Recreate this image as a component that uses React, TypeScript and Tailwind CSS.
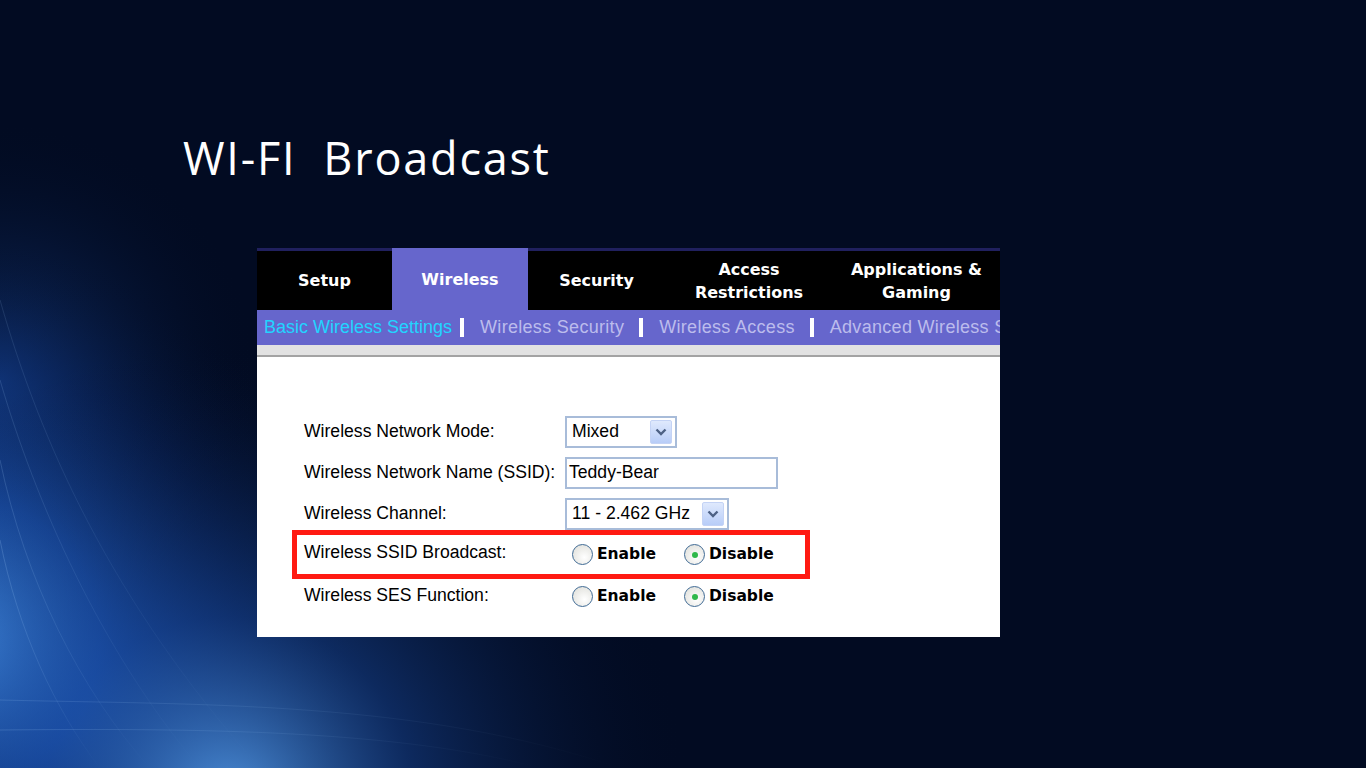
import React from 'react';

const tabs = [
  { label: ['Setup'], w: 'w-[135px]' },
  { label: ['Wireless'], w: 'w-[136px]', active: true },
  { label: ['Security'], w: 'w-[137px]' },
  { label: ['Access', 'Restrictions'], w: 'w-[168px]' },
  { label: ['Applications &', 'Gaming'], w: 'w-[167px]' },
];

const subLinks = ['Wireless Security', 'Wireless Access', 'Advanced Wireless S'];

const Backdrop = () => (
  <svg className="absolute inset-0" width="1366" height="768" viewBox="0 0 1366 768">
    <defs>
      <radialGradient id="glowLeft" cx="-40" cy="640" r="400" gradientUnits="userSpaceOnUse">
        <stop offset="0" stopColor="#4a9af5" stopOpacity="1" />
        <stop offset="0.35" stopColor="#1f5cc2" stopOpacity="0.75" />
        <stop offset="0.7" stopColor="#0b2a6c" stopOpacity="0.35" />
        <stop offset="1" stopColor="#020b22" stopOpacity="0" />
      </radialGradient>
      <radialGradient id="glowBottom" cx="230" cy="800" r="460" gradientUnits="userSpaceOnUse">
        <stop offset="0" stopColor="#5aa6f7" stopOpacity="0.85" />
        <stop offset="0.4" stopColor="#1b4fa8" stopOpacity="0.45" />
        <stop offset="1" stopColor="#020b22" stopOpacity="0" />
      </radialGradient>
      <radialGradient id="glowEdge" cx="0" cy="380" r="260" gradientUnits="userSpaceOnUse">
        <stop offset="0" stopColor="#1a4ea8" stopOpacity="0.6" />
        <stop offset="1" stopColor="#020b22" stopOpacity="0" />
      </radialGradient>
      <linearGradient id="streak" x1="0" y1="0" x2="1" y2="0">
        <stop offset="0" stopColor="#a9d4ff" stopOpacity="0.5" />
        <stop offset="1" stopColor="#a9d4ff" stopOpacity="0" />
      </linearGradient>
    </defs>
    <rect width="1366" height="768" fill="#020b22" />
    <rect width="1366" height="768" fill="url(#glowEdge)" />
    <rect width="1366" height="768" fill="url(#glowLeft)" />
    <rect width="1366" height="768" fill="url(#glowBottom)" />
    <g fill="none" stroke="url(#streak)" strokeWidth="1">
      <path d="M0 300 C 40 440, 110 600, 260 768" opacity="0.25" />
      <path d="M0 380 C 35 500, 100 650, 200 768" opacity="0.3" />
      <path d="M0 460 C 25 580, 80 690, 150 768" opacity="0.35" />
      <path d="M0 540 C 18 630, 55 710, 100 768" opacity="0.4" />
      <path d="M0 700 C 200 705, 420 700, 620 768" opacity="0.3" />
      <path d="M0 730 C 200 728, 400 730, 540 768" opacity="0.35" />
    </g>
  </svg>
);

const Dropdown = ({ value, w }: { value: string; w: string }) => (
  <div className={`${w} h-[32px] border-2 border-[#a8bcd9] bg-white flex items-center justify-between pl-[5px] pr-[3px]`}>
    <span className="text-[17.6px] text-black">{value}</span>
    <span className="w-[22px] h-[24px] rounded-[2px] bg-[linear-gradient(#dfe9fd,#b8cdf8)] border border-[#c4d3f5] flex items-center justify-center">
      <svg width="12" height="8" viewBox="0 0 12 8">
        <path d="M1.5 1.5 L6 6 L10.5 1.5" fill="none" stroke="#4d6185" strokeWidth="2.4" />
      </svg>
    </span>
  </div>
);

const Radio = ({ checked }: { checked?: boolean }) => (
  <span className="w-[21px] h-[21px] rounded-full border-[1.5px] border-[#3f6a94] bg-[radial-gradient(circle_at_60%_65%,#ffffff,#dcdcd6)] flex items-center justify-center">
    {checked && <span className="w-[6px] h-[6px] rounded-full bg-[#2fb84a]" />}
  </span>
);

const RadioPair = () => (
  <div className="flex items-center font-['DejaVu_Sans',sans-serif] font-bold text-[15.5px] text-black">
    <Radio />
    <span className="ml-[4px] w-[87px]">Enable</span>
    <Radio checked />
    <span className="ml-[4px]">Disable</span>
  </div>
);

export default function App() {
  return (
    <div className="relative w-[1366px] h-[768px] overflow-hidden bg-[#020b22] font-['Liberation_Sans',Arial,sans-serif]">
      <Backdrop />
      <div className="relative pl-[183px] pt-[128px]">
        <h1 className="font-['Open_Sans',sans-serif] text-[45px] leading-[60px] tracking-[1.8px] text-white font-normal">
          WI-FI&nbsp; Broadcast
        </h1>

        <div className="ml-[74px] mt-[60px] w-[743px] bg-white">
          {/* main tabs */}
          <div className="flex h-[62px] bg-black border-t-[3px] border-[#20205e] font-['DejaVu_Sans',sans-serif] font-bold text-white text-[16px] leading-[23px]">
            {tabs.map((t) => (
              <div
                key={t.label[0]}
                className={`${t.w} flex flex-col items-center justify-center text-center ${t.active ? 'bg-[#6666cc] -mt-[3px] h-[62px]' : ''}`}
              >
                {t.label.map((l) => (
                  <span key={l}>{l}</span>
                ))}
              </div>
            ))}
          </div>

          {/* sub tabs (the last one runs past the panel edge, as in the original frame) */}
          <div className="h-[35px] bg-[#6666cc] flex items-center pl-[7px] text-[18px] whitespace-nowrap overflow-hidden">
            <span className="text-[#22d4ff]">Basic Wireless Settings</span>
            {subLinks.map((s, i) => (
              <React.Fragment key={s}>
                <span className={`${i === 0 ? 'ml-[8px]' : 'ml-[15px]'} mr-[16px] w-[4px] h-[19px] shrink-0 bg-white`} />
                <span className="text-[#bcbcec] tracking-[0.3px]">{s}</span>
              </React.Fragment>
            ))}
          </div>

          {/* grey band */}
          <div className="h-[12px] bg-[#e2e2e2] border-b-2 border-[#a3a3a3]" />

          {/* form */}
          <div className="pt-[54px] pb-[21px] text-[17.6px] text-black">
            <div className="h-[41px] flex items-center pl-[47px]">
              <span className="w-[261px]">Wireless Network Mode:</span>
              <Dropdown value="Mixed" w="w-[112px]" />
            </div>
            <div className="h-[41px] flex items-center pl-[47px]">
              <span className="w-[261px]">Wireless Network Name (SSID):</span>
              <div className="w-[213px] h-[32px] border-2 border-[#a8bcd9] flex items-center pl-[2px]">Teddy-Bear</div>
            </div>
            <div className="h-[41px] flex items-center pl-[47px]">
              <span className="w-[261px]">Wireless Channel:</span>
              <Dropdown value="11 - 2.462 GHz" w="w-[164px]" />
            </div>
            <div className="-my-[4px] ml-[35px] w-[518px] h-[49px] border-[5px] border-[#ff1a12] flex items-center pl-[7px]">
              <span className="w-[261px] -mt-[4px]">Wireless SSID Broadcast:</span>
              <div className="ml-[7px]">
                <RadioPair />
              </div>
            </div>
            <div className="h-[41px] flex items-center pl-[47px]">
              <span className="w-[261px]">Wireless SES Function:</span>
              <div className="ml-[7px] mt-[2px]">
                <RadioPair />
              </div>
            </div>
          </div>
        </div>
      </div>
    </div>
  );
}
